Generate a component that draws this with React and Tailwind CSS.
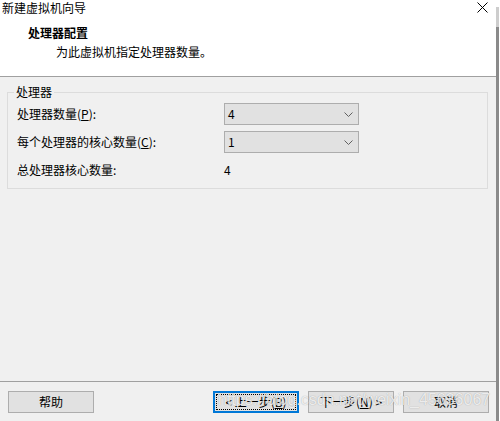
import React from 'react'

// Windows-style "new VM wizard" dialog, processor config page

const FONT = { fontFamily: '"Noto Sans CJK SC", "Microsoft YaHei", sans-serif' }

function Combo({ value }) {
  return (
    <div className="flex h-[22px] w-[135px] items-center justify-between border border-[#adadad] bg-[#e1e1e1] pl-[3px] pr-[5px] text-[12px] leading-[16px] text-black">
      <span>{value}</span>
      <svg width="9" height="5" viewBox="0 0 9 5" className="text-[#606060]">
        <path d="M0.5 0.5 L4.5 4.5 L8.5 0.5" fill="none" stroke="currentColor" strokeWidth="1" />
      </svg>
    </div>
  )
}

function Btn({ children, focused = false, className = '' }) {
  return (
    <div
      className={`relative flex h-[22px] w-[86px] items-center justify-center bg-[#e1e1e1] text-[12px] leading-[16px] text-black ${
        focused ? 'border-2 border-[#0078d7]' : 'border border-[#adadad]'
      } ${className}`}
    >
      {focused && <div className="absolute inset-[1px] border border-dotted border-black" />}
      {children}
    </div>
  )
}

export default function App() {
  return (
    <div className="relative flex h-[421px] w-[500px] overflow-hidden bg-white" style={FONT}>
      <div className="flex w-[496px] flex-col bg-[#f0f0f0]">
        {/* header */}
        <div className="relative h-[77px] border-b border-[#a0a0a0] bg-white">
          <div className="pl-[2px] text-[12px] leading-[16px] text-black">新建虚拟机向导</div>
          <svg width="11" height="11" viewBox="0 0 11 11" className="absolute left-[477px] top-[2px]">
            <path d="M0.5 0.5 L10.5 10.5 M10.5 0.5 L0.5 10.5" stroke="#000" strokeWidth="1" />
          </svg>
          <div className="mt-[9px] pl-[28px] text-[12px] font-bold leading-[16px] text-black">处理器配置</div>
          <div className="mt-[3px] pl-[56px] text-[12px] leading-[16px] text-black">为此虚拟机指定处理器数量。</div>
        </div>

        {/* group box */}
        <div className="flex-1">
          <div className="relative ml-[7px] mt-[15px] w-[481px] border border-[#dcdcdc] pb-[7px] pl-[9px] pt-[10px]">
            <span className="absolute left-[6px] top-[-9px] bg-[#f0f0f0] px-[2px] text-[12px] leading-[16px] text-black">
              处理器
            </span>
            <div className="flex flex-col gap-[6px] text-[12px] leading-[16px] text-black">
              <div className="flex h-[22px] items-center">
                <span className="w-[207px]">
                  处理器数量(<span className="underline">P</span>):
                </span>
                <Combo value="4" />
              </div>
              <div className="flex h-[22px] items-center">
                <span className="w-[207px]">
                  每个处理器的核心数量(<span className="underline">C</span>):
                </span>
                <Combo value="1" />
              </div>
              <div className="flex h-[22px] items-center">
                <span className="w-[207px]">总处理器核心数量:</span>
                <span>4</span>
              </div>
            </div>
          </div>
        </div>

        {/* footer */}
        <div className="flex h-[40px] items-start border-t border-[#a0a0a0] pt-[9px]">
          <Btn className="ml-[8px]">帮助</Btn>
          <Btn focused className="ml-[119px]">
            &lt; 上一步(<span className="underline">B</span>)
          </Btn>
          <Btn className="ml-[9px]">
            下一步(<span className="underline">N</span>) &gt;
          </Btn>
          <Btn className="ml-[9px]">取消</Btn>
        </div>
      </div>

      {/* right edge */}
      <div className="flex w-[3px] flex-col">
        <div className="h-[7px] bg-white" />
        <div className="h-[20px] bg-[#cdcdcd]" />
        <div className="flex-1 bg-[#8a8a8a]" />
      </div>
      <div className="w-[1px] bg-white" />

      {/* watermark */}
      <div
        className="pointer-events-none absolute left-[218px] top-[390px] text-[16px] leading-[20px] text-white/80 [text-shadow:0_0_1px_rgba(0,0,0,0.35)]"
        style={{ fontFamily: '"Liberation Sans", Arial, sans-serif' }}
      >
        https://blog.csdn.net/weixin_45636067
      </div>
    </div>
  )
}
